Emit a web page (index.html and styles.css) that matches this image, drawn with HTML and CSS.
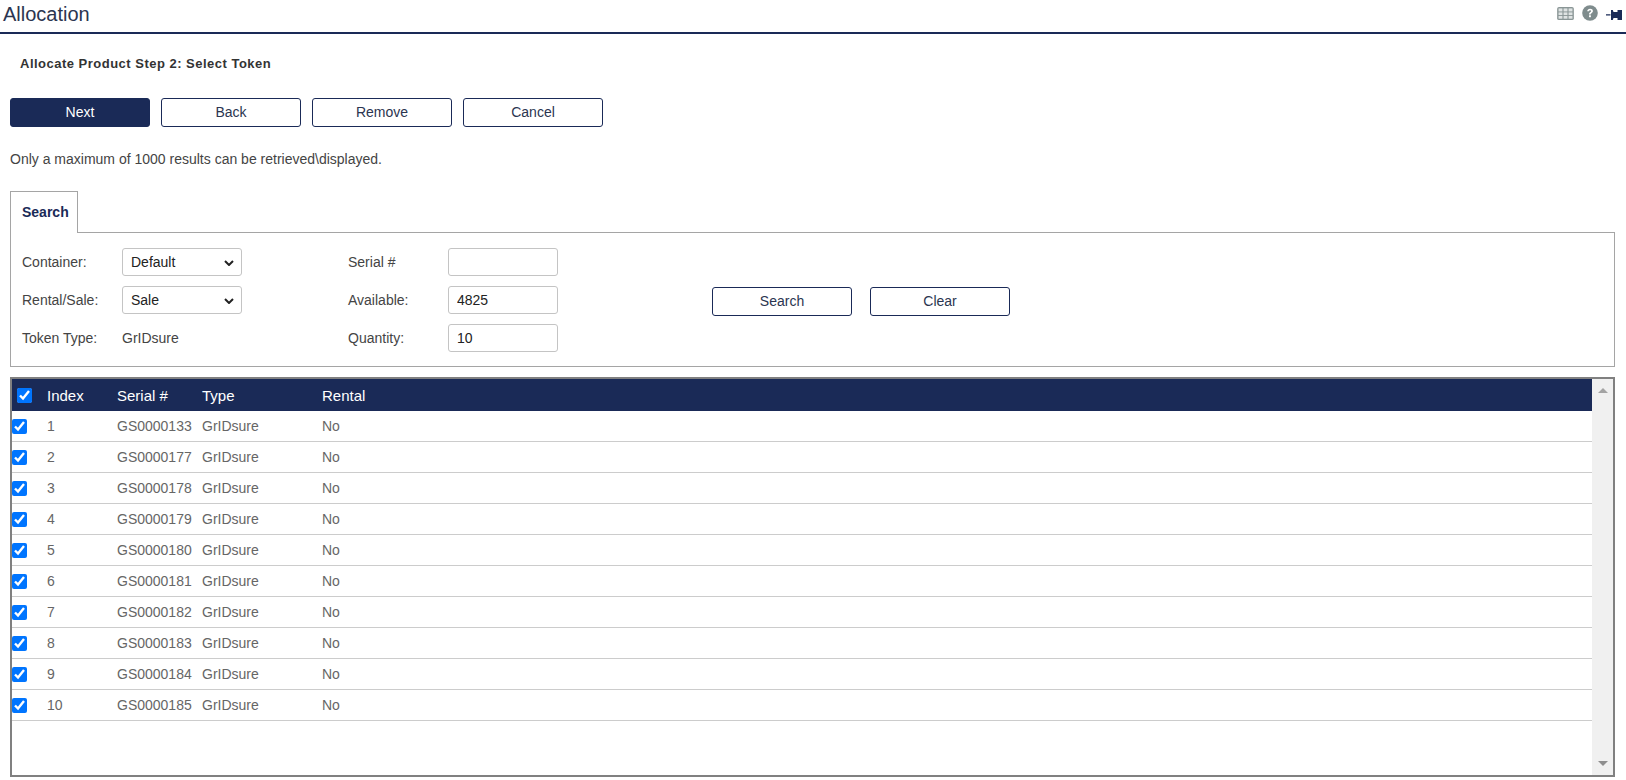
FILE: index.html
```html
<!DOCTYPE html>
<html lang="en">
<head>
<meta charset="utf-8">
<title>Allocation</title>
<link rel="stylesheet" href="styles.css">
</head>
<body>
<header class="titlebar">
  <h1 class="title">Allocation</h1>
  <div class="tools">
    <svg class="icon-table" width="17" height="13" viewBox="0 0 18 14"><rect x="0" y="0" width="18" height="14" rx="2" fill="#8a9696"/><g fill="#dfe3e3"><rect x="1.500" y="1.500" width="4.200" height="3.300"/><rect x="6.900" y="1.500" width="4.200" height="3.300"/><rect x="12.300" y="1.500" width="4.200" height="3.300"/><rect x="1.500" y="5.800" width="4.200" height="2.900"/><rect x="6.900" y="5.800" width="4.200" height="2.900"/><rect x="12.300" y="5.800" width="4.200" height="2.900"/><rect x="1.500" y="9.700" width="4.200" height="2.900"/><rect x="6.900" y="9.700" width="4.200" height="2.900"/><rect x="12.300" y="9.700" width="4.200" height="2.900"/></g></svg>
    <svg class="icon-help" width="16" height="16" viewBox="0 0 16 16"><circle cx="8" cy="8" r="7.800" fill="#7f8c8d"/><path d="M5.200 6.200C5.300 4.600 6.500 3.700 8.100 3.700c1.600 0 2.800.9 2.800 2.300 0 1.200-.7 1.700-1.400 2.200-.6.4-.8.7-.8 1.300H7c0-1.100.3-1.700 1.100-2.300.6-.4 1-.7 1-1.200 0-.5-.4-.8-1-.8-.7 0-1.100.4-1.200 1z" fill="#fff"/><rect x="7" y="10.300" width="1.900" height="1.900" fill="#fff"/></svg>
    <svg class="icon-pin" width="16" height="10" viewBox="0 0 16 10"><path d="M0 4.200h4.500v1.400H0zM5 0h1.800l.7 2h4V0H16v10h-4.500V8h-4l-.7 2H5z" fill="#1a2a57"/></svg>
  </div>
</header>

<main class="page">
  <h2 class="step">Allocate Product Step 2: Select Token</h2>

  <div class="actions">
    <button class="btn btn-primary" type="button">Next</button>
    <button class="btn" type="button">Back</button>
    <button class="btn" type="button">Remove</button>
    <button class="btn" type="button">Cancel</button>
  </div>

  <p class="notice">Only a maximum of 1000 results can be retrieved\displayed.</p>

  <div class="tabs"><div class="tab">Search</div></div>
  <section class="panel">
    <div class="form-col form-col-left">
      <div class="field"><label class="label">Container:</label>
        <span class="select-wrap"><select class="control select"><option>Default</option></select><svg class="chevron" width="10" height="6" viewBox="0 0 10 6"><path d="M1 1l4 4 4-4" fill="none" stroke="#222" stroke-width="2"/></svg></span></div>
      <div class="field"><label class="label">Rental/Sale:</label>
        <span class="select-wrap"><select class="control select"><option>Sale</option></select><svg class="chevron" width="10" height="6" viewBox="0 0 10 6"><path d="M1 1l4 4 4-4" fill="none" stroke="#222" stroke-width="2"/></svg></span></div>
      <div class="field"><span class="label">Token Type:</span><span class="value">GrIDsure</span></div>
    </div>
    <div class="form-col form-col-mid">
      <div class="field"><label class="label">Serial #</label>
        <input class="control input" type="text" value=""></div>
      <div class="field"><label class="label">Available:</label>
        <input class="control input" type="text" value="4825"></div>
      <div class="field"><label class="label">Quantity:</label>
        <input class="control input" type="text" value="10"></div>
    </div>
    <div class="panel-actions">
      <button class="btn" type="button">Search</button>
      <button class="btn" type="button">Clear</button>
    </div>
  </section>

  <section class="grid">
    <div class="grid-body">
      <div class="row row-head">
        <span class="cell-check cell-check-head"><input class="check" type="checkbox" checked></span>
        <span>Index</span><span>Serial #</span><span>Type</span><span>Rental</span>
      </div>
      <div class="row"><span class="cell-check"><input class="check" type="checkbox" checked></span><span>1</span><span>GS0000133</span><span>GrIDsure</span><span>No</span></div>
      <div class="row"><span class="cell-check"><input class="check" type="checkbox" checked></span><span>2</span><span>GS0000177</span><span>GrIDsure</span><span>No</span></div>
      <div class="row"><span class="cell-check"><input class="check" type="checkbox" checked></span><span>3</span><span>GS0000178</span><span>GrIDsure</span><span>No</span></div>
      <div class="row"><span class="cell-check"><input class="check" type="checkbox" checked></span><span>4</span><span>GS0000179</span><span>GrIDsure</span><span>No</span></div>
      <div class="row"><span class="cell-check"><input class="check" type="checkbox" checked></span><span>5</span><span>GS0000180</span><span>GrIDsure</span><span>No</span></div>
      <div class="row"><span class="cell-check"><input class="check" type="checkbox" checked></span><span>6</span><span>GS0000181</span><span>GrIDsure</span><span>No</span></div>
      <div class="row"><span class="cell-check"><input class="check" type="checkbox" checked></span><span>7</span><span>GS0000182</span><span>GrIDsure</span><span>No</span></div>
      <div class="row"><span class="cell-check"><input class="check" type="checkbox" checked></span><span>8</span><span>GS0000183</span><span>GrIDsure</span><span>No</span></div>
      <div class="row"><span class="cell-check"><input class="check" type="checkbox" checked></span><span>9</span><span>GS0000184</span><span>GrIDsure</span><span>No</span></div>
      <div class="row"><span class="cell-check"><input class="check" type="checkbox" checked></span><span>10</span><span>GS0000185</span><span>GrIDsure</span><span>No</span></div>
    </div>
    <div class="scrollbar">
      <span class="arrow arrow-up"></span>
      <span class="arrow arrow-down"></span>
    </div>
  </section>
</main>
</body>
</html>
```
FILE: styles.css
```css
* { box-sizing: border-box; }

html, body { margin: 0; padding: 0; height: 100%; }

body {
  background: #fff;
  color: #333;
  font-family: "Liberation Sans", Arial, sans-serif;
  font-size: 14px;
  overflow: hidden;
}

.titlebar {
  height: 34px;
  border-bottom: 2px solid #1a2a57;
  display: flex;
  justify-content: space-between;
  padding: 0 4px 0 3px;
}

.title {
  margin: 0;
  font-size: 20px;
  font-weight: 400;
  line-height: 28px;
  color: #2b3550;
}

.tools {
  display: flex;
  gap: 8px;
  align-items: flex-start;
  padding-top: 5px;
}

.icon-table { margin-top: 2px; }
.icon-pin { margin-top: 5px; }

.page { padding: 0 10px; }

.step {
  margin: 0;
  padding: 21px 0 0 10px;
  font-size: 13px;
  font-weight: 700;
  line-height: 18px;
  letter-spacing: 0.49px;
  color: #333;
}

.actions {
  display: flex;
  gap: 11px;
  margin-top: 25px;
}

.btn {
  width: 140px;
  height: 29px;
  padding: 0 0 2px;
  border: 1px solid #1a2a57;
  border-radius: 3px;
  background: #fff;
  color: #2b3550;
  font: 14px "Liberation Sans", Arial, sans-serif;
}

.btn-primary {
  background: #1a2a57;
  color: #fff;
}

.notice {
  margin: 0;
  padding-top: 24px;
  line-height: 16px;
  color: #444;
}

.tabs {
  display: flex;
  margin-top: 24px;
  height: 41px;
}

.tab {
  width: 68px;
  height: 42px;
  padding-left: 11px;
  border: 1px solid #a5a5a5;
  border-bottom: 0;
  background: #fff;
  color: #1a2a57;
  font-weight: 700;
  line-height: 41px;
  position: relative;
  z-index: 1;
}

.panel {
  width: 1605px;
  height: 135px;
  border: 1px solid #a5a5a5;
  display: flex;
  padding: 15px 0 0 11px;
}

.form-col {
  display: flex;
  flex-direction: column;
  gap: 10px;
}

.form-col-left { width: 326px; }
.form-col-mid { width: 364px; }

.field {
  display: flex;
  align-items: center;
  height: 28px;
}

.label {
  width: 100px;
  color: #444;
}

.value { color: #444; }

.control {
  height: 28px;
  border: 1px solid #c4c4c4;
  border-radius: 3px;
  background: #fff;
  color: #222;
  font: 14px "Liberation Sans", Arial, sans-serif;
}

.select-wrap {
  position: relative;
  display: block;
  width: 120px;
  height: 28px;
}

.select {
  display: block;
  width: 120px;
  padding: 0 0 0 8px;
  appearance: none;
}

.chevron {
  position: absolute;
  top: 12px;
  right: 8px;
  pointer-events: none;
}

.input {
  width: 110px;
  padding: 0 8px;
}

.panel-actions {
  display: flex;
  gap: 18px;
  padding-top: 39px;
}

.grid {
  width: 1605px;
  height: 400px;
  margin-top: 10px;
  border: 2px solid #808080;
  display: flex;
}

.grid-body { flex: 1; }

.row {
  display: grid;
  grid-template-columns: 35px 70px 85px 120px 1fr;
  align-items: center;
  height: 31px;
  border-bottom: 1px solid #ccc;
  color: #666;
}

.row-head {
  height: 32px;
  background: #1a2a57;
  color: #fff;
  font-size: 15px;
  border-bottom: 0;
}

.cell-check {
  display: flex;
  align-items: center;
}

.cell-check-head { padding-left: 5px; }

.check {
  width: 15px;
  height: 15px;
  margin: 0;
  accent-color: #0075ff;
}

.scrollbar {
  width: 21px;
  background: #f0f0f0;
  display: flex;
  flex-direction: column;
  justify-content: space-between;
  align-items: center;
  padding: 9px 0;
}

.arrow {
  width: 0;
  height: 0;
  border-left: 5px solid transparent;
  border-right: 5px solid transparent;
}

.arrow-up { border-bottom: 5px solid #a3a3a3; }
.arrow-down { border-top: 5px solid #8e8e8e; }
```
